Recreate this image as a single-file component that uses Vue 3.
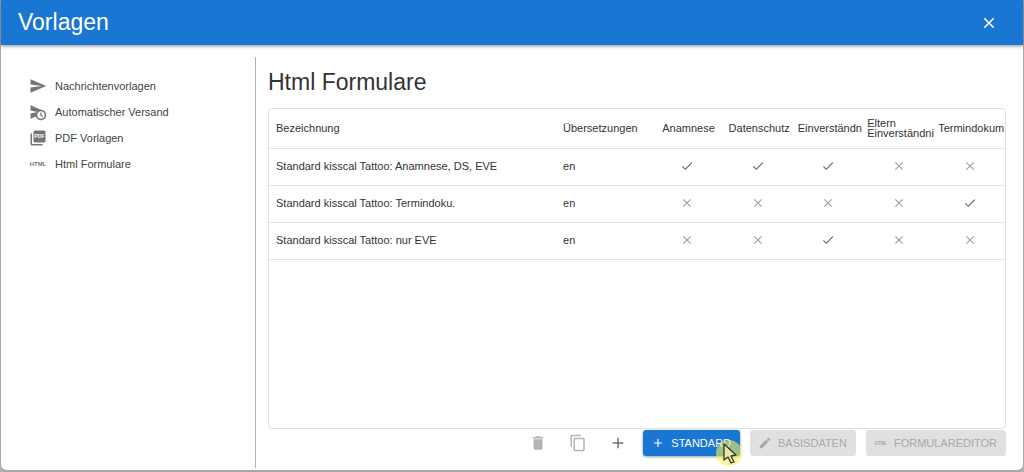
<script setup>
import { h } from 'vue'

const paths = {
  send: 'M2.01 21 23 12 2.01 3 2 10l15 2-15 2z',
  schedule:
    'M16.5 12.5H15v4l3 2 .75-1.23-2.25-1.52V12.5zM16 9 2 3v7l9 2-9 2v7l7.27-3.11C10.09 20.83 12.79 23 16 23c3.86 0 7-3.14 7-7s-3.14-7-7-7zm0 12c-2.75 0-4.98-2.22-5-4.97v-.07c.02-2.74 2.25-4.97 5-4.97 2.76 0 5 2.24 5 5S18.76 21 16 21z',
  check: 'M9 16.17 4.83 12l-1.42 1.41L9 19 21 7l-1.41-1.41z',
  close:
    'M19 6.41 17.59 5 12 10.59 6.41 5 5 6.41 10.59 12 5 17.59 6.41 19 12 13.41 17.59 19 19 17.59 13.41 12z',
  trash: 'M6 19c0 1.1.9 2 2 2h8c1.1 0 2-.9 2-2V7H6v12zM19 4h-3.5l-1-1h-5l-1 1H5v2h14V4z',
  copy: 'M16 1H4c-1.1 0-2 .9-2 2v14h2V3h12V1zm3 4H8c-1.1 0-2 .9-2 2v14c0 1.1.9 2 2 2h11c1.1 0 2-.9 2-2V7c0-1.1-.9-2-2-2zm0 16H8V7h11v14z',
  add: 'M19 13h-6v6h-2v-6H5v-2h6V5h2v6h6v2z',
  edit: 'M3 17.25V21h3.75L17.81 9.94l-3.75-3.75L3 17.25zM20.71 7.04c.39-.39.39-1.02 0-1.41l-2.34-2.34c-.39-.39-1.02-.39-1.41 0l-1.83 1.83 3.75 3.75 1.83-1.83z',
}

const label = (x, y, size, fill, text) =>
  h('text', { x, y, fill, 'font-size': size, 'font-weight': 700, 'text-anchor': 'middle' }, text)

const drawings = {
  html: () => label(12, 15, 8, 'currentColor', 'HTML'),
  pdf: () => [
    h('rect', { x: 6, y: 2, width: 16, height: 16, rx: 2 }),
    h('path', { d: 'M4 6H2v14c0 1.1.9 2 2 2h14v-2H4z' }),
    label(14, 12, 7, '#fff', 'PDF'),
  ],
}

const Icon = (props) =>
  h(
    'svg',
    { viewBox: '0 0 24 24', fill: 'currentColor', 'aria-hidden': 'true' },
    drawings[props.name] ? drawings[props.name]() : h('path', { d: paths[props.name] }),
  )
Icon.props = ['name']

const menu = [
  { icon: 'send', text: 'Nachrichtenvorlagen' },
  { icon: 'schedule', text: 'Automatischer Versand' },
  { icon: 'pdf', text: 'PDF Vorlagen' },
  { icon: 'html', text: 'Html Formulare' },
]

const flags = ['Anamnese', 'Datenschutz', 'Einverständn', 'Eltern Einverständni', 'Termindokum']

const rows = [
  { name: 'Standard kisscal Tattoo: Anamnese, DS, EVE', lang: 'en', values: [1, 1, 1, 0, 0] },
  { name: 'Standard kisscal Tattoo: Termindoku.', lang: 'en', values: [0, 0, 0, 0, 1] },
  { name: 'Standard kisscal Tattoo: nur EVE', lang: 'en', values: [0, 0, 1, 0, 0] },
]
</script>

<template>
  <div class="dialog">
    <header class="bar">
      <h1>Vorlagen</h1>
      <button class="close" type="button" aria-label="Schließen"><Icon name="close" class="i18" /></button>
    </header>
    <div class="body">
      <nav class="side">
        <a v-for="m in menu" :key="m.text" href="#">
          <Icon :name="m.icon" class="i18" /><span>{{ m.text }}</span>
        </a>
      </nav>
      <main>
        <h2>Html Formulare</h2>
        <div class="grid">
          <table>
            <colgroup>
              <col class="c-name" />
              <col class="c-lang" />
              <col v-for="f in flags" :key="f" />
            </colgroup>
            <thead>
              <tr>
                <th>Bezeichnung</th>
                <th>Übersetzungen</th>
                <th v-for="f in flags" :key="f" class="flag"><span>{{ f }}</span></th>
              </tr>
            </thead>
            <tbody>
              <tr v-for="r in rows" :key="r.name">
                <td>{{ r.name }}</td>
                <td>{{ r.lang }}</td>
                <td v-for="(v, i) in r.values" :key="i" class="mark" :class="{ yes: v }">
                  <Icon :name="v ? 'check' : 'close'" class="i14" />
                </td>
              </tr>
            </tbody>
          </table>
        </div>
        <footer>
          <button class="tool" type="button" disabled aria-label="Löschen"><Icon name="trash" class="i18" /></button>
          <button class="tool" type="button" disabled aria-label="Kopieren"><Icon name="copy" class="i18" /></button>
          <button class="tool on" type="button" aria-label="Hinzufügen"><Icon name="add" class="i18" /></button>
          <div class="actions">
            <div class="spot">
              <button class="btn primary" type="button"><Icon name="add" class="i14" />STANDARD</button>
              <svg class="pointer" viewBox="0 0 28 28" aria-hidden="true">
                <circle cx="14" cy="14" r="13" fill="#f4ee5c" fill-opacity=".6" />
                <path
                  d="M9 5v16l4-3 3 6 3-1-3-6 5-1z"
                  fill="#e9e8a0"
                  stroke="#333"
                  stroke-width="1.3"
                  stroke-linejoin="round"
                />
              </svg>
            </div>
            <button class="btn" type="button" disabled><Icon name="edit" class="i14" />BASISDATEN</button>
            <button class="btn" type="button" disabled><Icon name="html" class="i14" />FORMULAREDITOR</button>
          </div>
        </footer>
      </main>
    </div>
  </div>
</template>

<style>
body {
  background: #b0b0b0;
}
</style>

<style scoped>
.dialog {
  box-sizing: border-box;
  min-height: 100vh;
  display: flex;
  flex-direction: column;
  border: 1px solid #a8a8a8;
  border-top: 0;
  border-bottom-width: 2px;
  border-radius: 0 0 7px 7px;
  background: #fff;
  color: #333;
  font-family: "Liberation Sans", Arial, sans-serif;
  font-size: 11px;
}
svg {
  display: block;
  flex: none;
}
.i14 { width: 14px; height: 14px; }
.i18 { width: 18px; height: 18px; }
button {
  font: inherit;
  border: 0;
  padding: 0;
  display: flex;
  align-items: center;
  justify-content: center;
}
.bar {
  height: 45px;
  display: flex;
  align-items: center;
  justify-content: space-between;
  padding: 0 25px 0 17px;
  background: #1976d2;
  color: #fff;
  box-shadow: 0 1px 4px rgba(0, 0, 0, 0.45);
}
h1,
h2 {
  margin: 0;
  font-size: 23px;
  font-weight: 400;
}
.close {
  background: none;
  color: #fff;
}
.body {
  flex: 1;
  display: flex;
  padding: 12px 17px 2px 0;
}
.side {
  box-sizing: border-box;
  width: 255px;
  flex: none;
  padding: 16px 0 0 28px;
  border-right: 1px solid #b0b0b0;
}
.side a {
  display: flex;
  align-items: center;
  gap: 8px;
  height: 26px;
  color: #444;
  text-decoration: none;
}
.side svg {
  color: #757575;
}
main {
  flex: 1;
  min-width: 0;
  display: flex;
  flex-direction: column;
  padding: 12px 0 12px 12px;
}
h2 {
  line-height: 27px;
  margin-bottom: 12px;
}
.grid {
  flex: 1;
  border: 1px solid #e2e2e2;
  border-radius: 4px;
}
table {
  width: 100%;
  table-layout: fixed;
  border-collapse: collapse;
}
.c-name { width: 39%; }
.c-lang { width: 13%; }
th,
td {
  box-sizing: border-box;
  height: 37px;
  padding: 0 0 1px 7px;
  border-bottom: 1px solid #e4e4e4;
  text-align: left;
  font-weight: 400;
  white-space: nowrap;
}
th {
  height: 39px;
}
.flag {
  padding: 0 0 0 3px;
}
.flag span {
  display: block;
  width: min-content;
  margin: 0 auto;
  line-height: 10px;
  white-space: normal;
}
.mark {
  padding: 0 0 1px;
  color: #a0a0a0;
}
.mark.yes {
  color: #666;
}
.mark svg {
  margin: 0 auto;
}
footer {
  display: flex;
  justify-content: flex-end;
  align-items: center;
  padding-top: 1px;
}
.tool {
  width: 40px;
  height: 26px;
  background: none;
  color: #b5b5b5;
}
.tool.on {
  color: #707070;
}
.actions {
  display: flex;
  gap: 10px;
  margin-left: 5px;
}
.btn {
  height: 26px;
  padding: 0 9px 0 8px;
  gap: 6px;
  border-radius: 3px;
  background: #e0e0e0;
  color: #a8a8a8;
}
.primary {
  background: #1976d2;
  color: #fff;
  box-shadow: 0 1px 3px rgba(0, 0, 0, 0.4);
}
.spot {
  position: relative;
}
.pointer {
  position: absolute;
  right: -3px;
  bottom: -11px;
  width: 28px;
  height: 28px;
}
</style>
